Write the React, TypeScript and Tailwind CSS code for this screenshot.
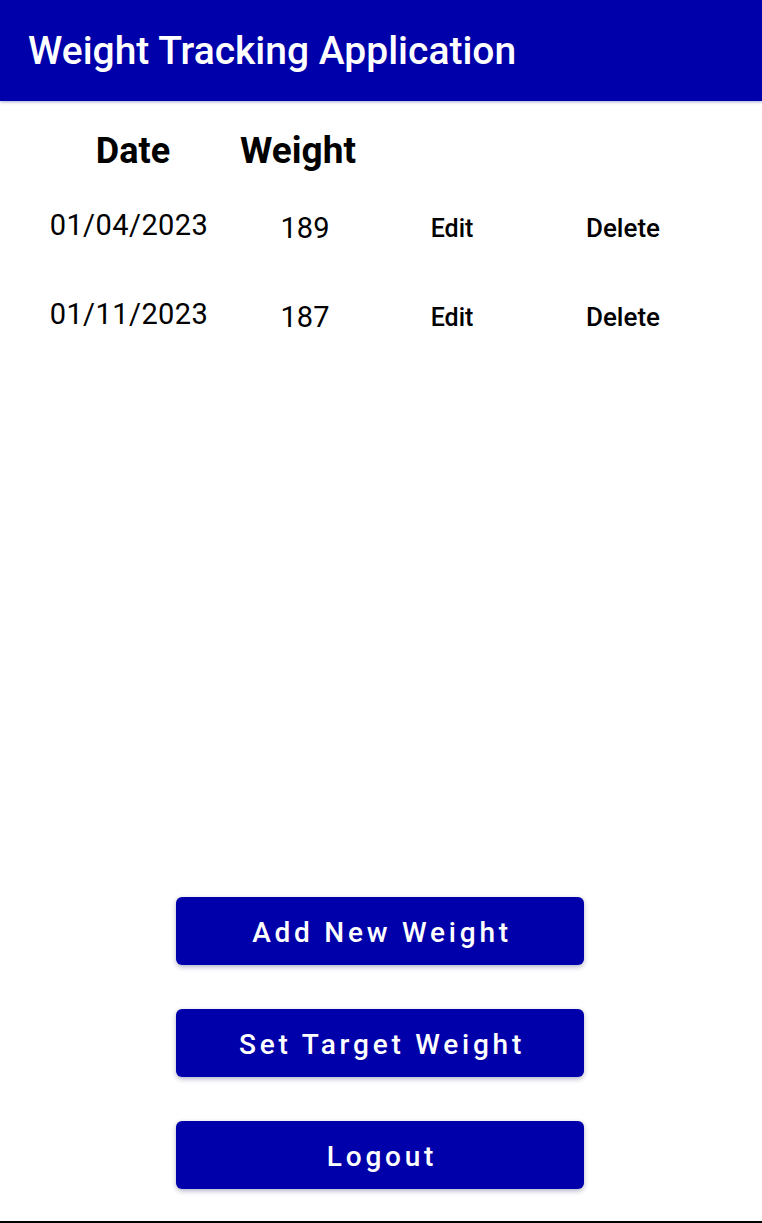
import React from 'react';

const entries = [
    { date: '01/04/2023', weight: '189' },
    { date: '01/11/2023', weight: '187' },
];

const actions = ['Add New Weight', 'Set Target Weight', 'Logout'];

export default function App() {
    return (
        <div className="flex h-[1223px] w-[762px] flex-col bg-white font-['Roboto',sans-serif] text-black">
            <header className="flex h-[101px] shrink-0 items-center bg-[#0000aa] pl-[28px] shadow-[0_1px_3px_rgba(0,0,120,0.35)]">
                <h1 className="mt-[1px] text-[39px] font-medium text-white">Weight Tracking Application</h1>
            </header>

            <div className="pt-[29px]">
                <div className="flex h-[42px] items-center text-[36px] font-bold leading-[42px]">
                    <span className="w-[266px] text-center">Date</span>
                    <span className="ml-[-68px] w-[200px] text-center text-[37px]">Weight</span>
                </div>

                <div className="mt-[37px] flex flex-col gap-[56px]">
                    {entries.map((entry) => (
                        <div key={entry.date} className="flex h-[33px] items-center">
                            <span className="w-[258px] text-center text-[29px] leading-[33px] tracking-[0.015em]">
                                {entry.date}
                            </span>
                            <span className="mt-[5px] w-[94px] text-center text-[29px] leading-[33px]">
                                {entry.weight}
                            </span>
                            <span className="ml-[2px] mt-[6px] w-[196px] text-center text-[25px] font-medium leading-[33px]">
                                Edit
                            </span>
                            <span className="mt-[6px] w-[146px] text-center text-[26px] font-medium leading-[33px]">
                                Delete
                            </span>
                        </div>
                    ))}
                </div>
            </div>

            <div className="flex-1" />

            <div className="flex flex-col gap-[44px] pb-[32px] pl-[176px]">
                {actions.map((label) => (
                    <button
                        key={label}
                        className="flex h-[68px] w-[408px] items-center justify-center rounded-[6px] bg-[#0000aa] pl-[4px] pt-[3px] text-[28px] font-medium tracking-[0.135em] text-white shadow-[0_2px_5px_rgba(0,0,80,0.3)]"
                    >
                        {label}
                    </button>
                ))}
            </div>

            <div className="h-[2px] shrink-0 bg-black" />
        </div>
    );
}
